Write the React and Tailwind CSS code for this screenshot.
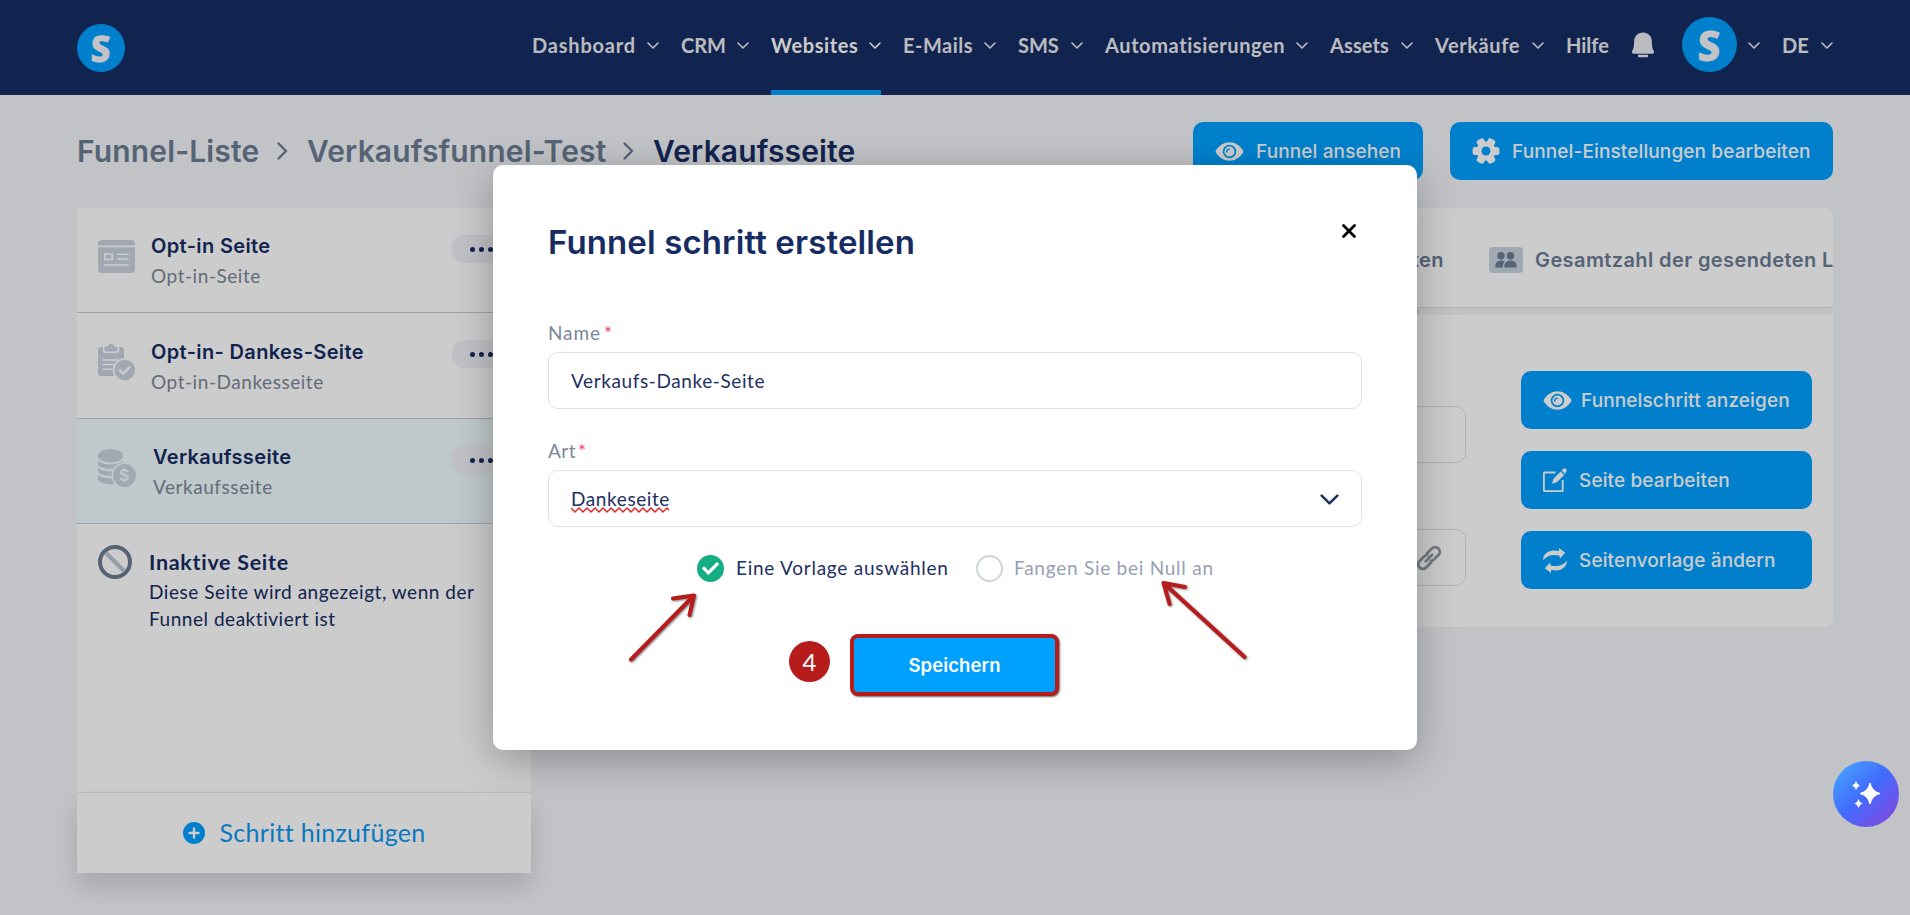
import React, { useState } from "react";
import { FaCheck } from "react-icons/fa";

const navItems = [
  { label: "Dashboard", className: "w-[103px] tracking-[0.8px]" },
  { label: "CRM", className: "w-[44px] tracking-[0px]" },
  { label: "Websites", className: "w-[86px] tracking-[0.6px]", active: true },
  { label: "E-Mails", className: "w-[69px] tracking-[0.5px]" },
  { label: "SMS", className: "w-[41px] tracking-[0px]" },
  { label: "Automatisierungen", className: "w-[179px] tracking-[0.6px]" },
  { label: "Assets", className: "w-[59px] tracking-[0.1px]" },
  { label: "Verkäufe", className: "w-[85px] tracking-[0.6px]" },
];

const Chevron = ({ className }) => (
  <svg viewBox="0 0 12 7" className={className} fill="none" stroke="currentColor" strokeLinecap="round" strokeLinejoin="round">
    <path d="M1 1l5 5 5-5" strokeWidth="1.6" />
  </svg>
);

const ChevronRight = () => (
  <svg viewBox="0 0 11 18" className="h-[18px] w-[11px] text-[#6b7c93]" fill="none" stroke="currentColor" strokeWidth="2.4" strokeLinecap="round" strokeLinejoin="round">
    <path d="M1.5 1.5L9 9l-7.5 7.5" />
  </svg>
);

const EyeIcon = () => (
  <svg viewBox="0 0 30 20" className="h-[19px] w-[29px] shrink-0">
    <path fill="currentColor" fillRule="evenodd" d="M.8 11.4C.2 10.5.2 9.5.8 8.6 4.200 3.400 9.200.2 15 .2s10.800 3.200 14.200 8.400c.6.9.6 1.900 0 2.800-3.400 5.200-8.400 8.400-14.200 8.400S4.200 16.600.8 11.400zM15 2.900a7.100 7.100 0 1 0 0 14.200 7.100 7.100 0 0 0 0-14.200z" />
    <path fill="currentColor" d="M15 4.700a5.300 5.300 0 1 0 0 10.600 5.300 5.300 0 0 0 0-10.600z" />
    <path d="M12 10.500a3 3 0 0 1 3-3" fill="none" stroke="#00a0ff" strokeWidth="1.500" strokeLinecap="round" />
  </svg>
);

const GearIcon = () => (
  <svg viewBox="0 0 28 28" className="size-[28px] shrink-0">
    <g fill="currentColor">
      <circle cx="14" cy="14" r="9.600" />
      {[30, 90, 150].map((deg) => (
        <rect key={deg} x="10" y="0.600" width="8" height="26.800" rx="2.600" transform={`rotate(${deg} 14 14)`} />
      ))}
    </g>
    <circle cx="14" cy="14" r="4.500" fill="#00a0ff" />
  </svg>
);

const EditIcon = () => (
  <svg viewBox="0 0 24 24" className="size-6 shrink-0">
    <path d="M12.500 4.500H1.800a.9.9 0 0 0-.9.9v16.900c0 .5.400.900.9.900h17a.9.900 0 0 0 .9-.9V12" fill="none" stroke="currentColor" strokeWidth="1.800" />
    <path fill="currentColor" d="M9 15.800l1.500-5L17.600 3.600l3.500 3.500-7.200 7.100zM18.600 2.600l1.700-1.800c.8-.8 1.800-.8 2.700 0 .9.9 1 2 .2 2.800L22 6.100z" />
  </svg>
);

const SwapIcon = () => (
  <svg viewBox="0 0 24 25" className="h-[25px] w-6 shrink-0" fill="currentColor">
    <path d="M0 12.300C-.2 6.500 5 2.500 10.500 2.500c2 0 3.800.2 5.500.5V0l6.200 4.800-5.200 5.700-.6-2.900C9.500 6 4.500 7.300 0 12.300z" />
    <path d="M24 12.700c.2 5.800-5 9.800-10.500 9.800-2 0-3.800-.2-5.500-.5V25l-6.200-4.800 5.200-5.700.6 2.900c6.900 1.600 11.900.3 16.400-4.700z" />
  </svg>
);

const LinkIcon = () => (
  <svg viewBox="0 0 26 26" className="size-[26px] text-[#9098a4]" fill="none" stroke="currentColor" strokeWidth="2.800" strokeLinecap="round">
    <path d="M9.800 16.200l6.400-6.400" />
    <path d="M11 8.500l4.900-4.900c1.900-1.900 4.600-1.900 6.500 0s1.900 4.600 0 6.500l-4.500 4.500c-.8.800-1.900 1.300-3.200 1.300" />
    <path d="M15 17.500l-4.900 4.900c-1.900 1.900-4.600 1.900-6.500 0s-1.900-4.600 0-6.500l4.500-4.500c.8-.8 1.900-1.300 3.200-1.300" />
  </svg>
);

const BrowserIcon = () => (
  <svg viewBox="0 0 37 33" className="h-[33px] w-[37px]">
    <path fill="currentColor" d="M0 5.500V4a4 4 0 0 1 4-4h29a4 4 0 0 1 4 4v1.500zM0 7.300h37V29a4 4 0 0 1-4 4H4a4 4 0 0 1-4-4z" />
    <g fill="none" stroke="#fff" strokeWidth="1.600" strokeLinecap="round">
      <rect x="6.800" y="14" width="7.400" height="5.400" />
      <path d="M19.500 14.200h11M19.500 19h11M6.500 25h24" />
    </g>
  </svg>
);

const ClipboardIcon = () => (
  <svg viewBox="0 0 38 38" className="size-[38px]">
    <rect x="0" y="4" width="26" height="29" rx="3.500" fill="currentColor" />
    <path d="M5.500 4.500v1.700c0 2 1.400 3.200 3.200 3.200h8.600c1.900 0 3.200-1.200 3.200-3.200V4.500c0-1.300-1-1.700-3-1.700h-.9C16 1 14.800 0 13 0s-3 1-3.600 2.800h-.9c-2 0-3 .400-3 1.700z" fill="currentColor" stroke="#fff" strokeWidth="1.600" />
    <path d="M5 17h15M5 21.500h11M5 26.200h9" stroke="#fff" strokeWidth="1.600" strokeLinecap="round" />
    <circle cx="26.800" cy="27" r="11.200" fill="currentColor" stroke="#fff" strokeWidth="1.700" />
    <path d="M21.800 27.300l3.500 3.400 6.300-6.600" fill="none" stroke="#fff" strokeWidth="2.400" strokeLinecap="round" strokeLinejoin="round" />
  </svg>
);

const CoinsIcon = () => (
  <svg viewBox="0 0 38 39" className="h-[39px] w-[38px]">
    <g fill="currentColor">
      <ellipse cx="12.500" cy="6.800" rx="12.500" ry="6.700" />
      <path d="M0 11.500c4.500 5.300 20.500 5.300 25 0v4.600c-4.300 5-20.700 5-25 0z" />
      <path d="M0 18.500c4.500 5.300 20.500 5.300 25 0v4.600c-4.300 5-20.700 5-25 0z" />
      <path d="M0 25.500c4.500 5.300 20.500 5.300 25 0v7c-4.300 4-20.700 4-25-1.500z" />
    </g>
    <circle cx="26.500" cy="26.500" r="12.200" fill="currentColor" stroke="#effafe" strokeWidth="1.600" />
    <text x="26.300" y="32.300" textAnchor="middle" fill="#effafe" fontFamily="Inter, sans-serif" fontSize="16" fontWeight="600">$</text>
  </svg>
);

const BanIcon = () => (
  <svg viewBox="0 0 34 34" className="size-[34px]" fill="none">
    <path d="M8 8l18 18" stroke="#bcc5d3" strokeWidth="4" />
    <circle cx="17" cy="17" r="15" stroke="#6b7c93" strokeWidth="4" />
  </svg>
);

const steps = [
  { title: "Opt-in Seite", type: "Opt-in-Seite", icon: <BrowserIcon />, row: "h-[105px]", iconBox: "mt-8", text: "mt-6 ml-4" },
  { title: "Opt-in- Dankes-Seite", type: "Opt-in-Dankesseite", icon: <ClipboardIcon />, row: "h-[106px]", iconBox: "mt-[30px]", text: "mt-[25px] ml-[15px]" },
  { title: "Verkaufsseite", type: "Verkaufsseite", icon: <CoinsIcon />, row: "h-[105px] bg-[#effafe]", iconBox: "mt-[30px]", text: "mt-6 ml-[17px]" },
];

const ActionButton = ({ icon, label, className }) => (
  <button className={`flex h-[58px] items-center rounded-[10px] bg-[#00a0ff] pl-[22px] text-[19px] font-medium tracking-[0.12px] whitespace-nowrap text-white ${className}`}>
    {icon}
    <span className="pt-[2px]">{label}</span>
  </button>
);

const Header = () => (
  <header className="flex h-[95px] items-center justify-between bg-[#162c63] px-[77px] font-['Lato','Open_Sans',sans-serif] text-[20px] font-bold text-[#e9ebf0]">
    <div className="flex size-12 items-center justify-center rounded-full bg-[#00a0ff] font-['Noto_Sans',sans-serif] text-[37px] leading-none font-black text-[#f2f4f9]">
      <span className="-skew-x-2 scale-x-95">S</span>
    </div>
    <nav className="flex h-[95px] items-start gap-[22px]">
      {navItems.map((item) => (
        <div
          key={item.label}
          className={`flex h-[95px] items-center gap-3 border-b-[5px] ${item.active ? "border-[#00a0ff] text-white" : "border-transparent"}`}
        >
          <span className={`whitespace-nowrap ${item.className}`}>{item.label}</span>
          <Chevron className="h-[7px] w-3" />
        </div>
      ))}
      <div className="flex h-[90px] items-center">
        <span className="w-[43px]">Hilfe</span>
        <svg viewBox="0 0 22 26" className="ml-[23px] h-[26px] w-[22px]" fill="currentColor">
          <path d="M11 .5c5.300 0 8.900 4 8.900 9 0 5.500.6 7 1.700 9 .3.500.4 1 .4 1.600 0 1-.6 1.700-1.700 1.700H1.700C.6 21.800 0 21.100 0 20.100c0-.6.1-1.100.4-1.600 1.100-2 1.700-3.500 1.700-9 0-5 3.600-9 8.900-9zM6 22.800h10v1.400c0 .8-.5 1-1.200 1H7.200c-.7 0-1.200-.2-1.200-1z" />
        </svg>
        <div className="mb-px ml-7 flex size-[55px] items-center justify-center rounded-full bg-[#00a0ff] font-['Noto_Sans',sans-serif] text-[42px] leading-none font-black text-[#f2f4f9]">
          <span className="-skew-x-2 scale-x-95">S</span>
        </div>
        <Chevron className="ml-[11px] h-[7px] w-3" />
        <span className="ml-[22px] w-[26px]">DE</span>
        <Chevron className="ml-[13px] h-[7px] w-3" />
      </div>
    </nav>
  </header>
);

const Sidebar = () => (
  <aside className="flex h-[665px] w-[454px] flex-col bg-white">
    {steps.map((step) => (
      <div key={step.title} className={`flex border-b border-[#c5ced9] pl-[21px] ${step.row}`}>
        <div className={`text-[#c9d2df] ${step.iconBox}`}>{step.icon}</div>
        <div className={step.text}>
          <h3 className="text-[20px] leading-7 font-semibold tracking-[0.36px] whitespace-nowrap">{step.title}</h3>
          <p className="mt-1 font-['Lato',sans-serif] text-[19px] leading-6 tracking-[0.55px] whitespace-nowrap text-[#7b8896]">
            {step.type}
          </p>
        </div>
        <button className="mt-[27px] mr-[20px] ml-auto flex h-7 w-[59px] items-center justify-center gap-1 rounded-[12px] bg-[#f1f2f8]">
          <i className="size-[5px] rounded-full bg-[#162c63]" />
          <i className="size-[5px] rounded-full bg-[#162c63]" />
          <i className="size-[5px] rounded-full bg-[#162c63]" />
        </button>
      </div>
    ))}
    <div className="flex grow pt-[21px] pl-[21px]">
      <BanIcon />
      <div className="ml-[17px] font-['Lato',sans-serif]">
        <h3 className="mt-[3px] text-[21.5px] leading-7 font-bold tracking-[0.7px]">Inaktive Seite</h3>
        <p className="mt-[2px] w-[340px] text-[19px] leading-[27px] tracking-[0.53px]">
          Diese Seite wird angezeigt, wenn der
          <br />
          Funnel deaktiviert ist
        </p>
      </div>
    </div>
    <button className="flex h-[81px] items-center justify-center gap-[15px] border-t border-[#ebebeb] font-['Lato',sans-serif] text-[25px] text-[#0d97f0] shadow-[0_14px_22px_rgba(0,0,0,0.14)]">
      <svg viewBox="0 0 22 22" className="size-[22px]">
        <circle cx="11" cy="11" r="11" fill="#00a0ff" />
        <path d="M11 6.500v9M6.500 11h9" stroke="#fff" strokeWidth="2.400" strokeLinecap="round" />
      </svg>
      <span className="tracking-[0.3px]">Schritt hinzufügen</span>
    </button>
  </aside>
);

const StepDetails = () => (
  <section className="h-[419px] grow overflow-hidden rounded-[8px] bg-white">
    <div className="flex h-[100px] items-center justify-end overflow-hidden border-b border-[#dcdee3] pt-[5px] text-[20px] font-semibold tracking-[0.4px] text-[#6b7c93]">
      <span className="shrink-0">Statistiken</span>
      <span className="ml-[45px] flex h-[26px] w-[34px] items-center justify-center rounded-[4px] bg-[#c9d2df]">
        <svg viewBox="0 0 22 16" className="h-4 w-[22px]" fill="currentColor">
          <circle cx="6" cy="3.800" r="3.700" />
          <circle cx="15.500" cy="3.800" r="3.700" />
          <path d="M.3 14.500C.3 11 2.500 8.500 6 8.500c1.500 0 2.700.400 3.600 1.200-1.300 1.300-1.900 3-1.900 5 0 .3 0 .5.100.8H1.300c-.7 0-1-.4-1-1zM9.300 14.500c0-3.600 2.600-6 6.200-6s6.200 2.400 6.200 6c0 .6-.4 1-1 1H10.300c-.6 0-1-.4-1-1z" />
        </svg>
      </span>
      <span className="ml-3 w-[298px] shrink-0 overflow-hidden whitespace-nowrap">Gesamtzahl der gesendeten L</span>
    </div>
    <div className="h-[7px] rounded-full bg-[#f4f4f4]">
      <div className="h-[7px] w-[864px] rounded-full bg-[#d4d7de]" />
    </div>
    <div className="flex justify-between pr-[21px] pl-[31px]">
      <div className="mt-[91px] w-[880px] space-y-[66px]">
        <div className="h-[57px] rounded-[10px] border border-[#dcdee3]" />
        <div className="flex h-[57px] items-center justify-end rounded-[10px] border border-[#dcdee3] pr-[23px]">
          <LinkIcon />
        </div>
      </div>
      <div className="mt-14 w-[291px] space-y-[22px]">
        <ActionButton icon={<EyeIcon />} label="Funnelschritt anzeigen" className="w-full gap-[9px]" />
        <ActionButton icon={<EditIcon />} label="Seite bearbeiten" className="w-full gap-3" />
        <ActionButton icon={<SwapIcon />} label="Seitenvorlage ändern" className="w-full gap-3" />
      </div>
    </div>
  </section>
);

const StepModal = () => {
  const [name, setName] = useState("Verkaufs-Danke-Seite");

  return (
    <div className="mt-[165px] flex h-[585px] w-[924px] flex-col rounded-[10px] bg-white px-[55px] font-['Lato',sans-serif] text-[#1e2f63] shadow-[0_10px_40px_rgba(0,0,0,0.28)]">
      <div className="flex h-[152px] items-start justify-between">
        <h2 className="mt-[57px] font-['Inter',sans-serif] text-[33px] leading-10 font-semibold tracking-[0.12px] text-[#162c63]">
          Funnel schritt erstellen
        </h2>
        <svg viewBox="0 0 14 14" className="mt-[59px] mr-[6px] size-[14px]" stroke="#000" strokeWidth="2.800" strokeLinecap="round">
          <path d="M1.500 1.500l11 11M12.500 1.500l-11 11" />
        </svg>
      </div>
      <label className="mt-1 flex h-[31px] gap-[3px] text-[19px] leading-6 tracking-[0.9px] text-[#7b869c]">
        Name<span className="text-[#f1416c]">*</span>
      </label>
      <input
        value={name}
        onChange={(e) => setName(e.target.value)}
        className="h-[57px] shrink-0 rounded-[10px] border border-[#e1e3e8] px-[22px] text-[19px] tracking-[0.6px]"
      />
      <label className="mt-[30px] flex h-[31px] gap-[2px] text-[19px] leading-6 tracking-[0.5px] text-[#7b869c]">
        Art<span className="text-[#f1416c]">*</span>
      </label>
      <div className="flex h-[57px] shrink-0 items-center justify-between rounded-[10px] border border-[#e1e3e8] px-[22px] text-[19px]">
        <div className="relative mt-[2px] tracking-[0.6px]">
          Dankeseite
          <svg className="absolute top-[22px] left-0 h-[6px] w-[98px]" fill="none" stroke="#e02020" strokeWidth="1.400">
            <path d="M0 1l4 4 4-4 4 4 4-4 4 4 4-4 4 4 4-4 4 4 4-4 4 4 4-4 4 4 4-4 4 4 4-4 4 4 4-4 4 4 4-4 4 4 4-4 4 4 4-4 4 4" />
          </svg>
        </div>
        <Chevron className="mt-px h-[11px] w-[19px]" />
      </div>
      <div className="mt-[27px] flex h-7 items-center pl-[149px] text-[19px] whitespace-nowrap">
        <span className="flex size-[27px] items-center justify-center rounded-full bg-[#14ae85] text-white">
          <FaCheck className="size-[17px]" />
        </span>
        <span className="mt-px ml-3 w-[212px] tracking-[0.75px]">Eine Vorlage auswählen</span>
        <span className="ml-[28px] size-[27px] rounded-full border-2 border-[#cfd3dc]" />
        <span className="mt-px ml-[11px] tracking-[0.75px] text-[#98a0b4]">Fangen Sie bei Null an</span>
      </div>
      <div className="mt-[52px] flex items-center pl-[241px]">
        <span className="mb-[7px] flex size-[41px] items-center justify-center rounded-full bg-[#b71c1c] text-[24px] text-white">
          4
        </span>
        <button className="ml-5 h-[62px] w-[209px] rounded-[8px] border-4 border-[#b71c1c] bg-[#00a0ff] pt-[2px] font-['Inter',sans-serif] text-[18.5px] font-semibold tracking-[0.1px] text-white shadow-[1px_1px_2px_rgba(0,0,0,0.6)]">
          Speichern
        </button>
      </div>
    </div>
  );
};

// red pointers to the two template options
const Pointers = () => (
  <svg viewBox="0 0 640 90" className="pointer-events-none absolute top-[575px] left-[620px] h-[90px] w-[640px] drop-shadow-[1px_1px_1px_rgba(0,0,0,0.5)]" fill="none" stroke="#b71c1c" strokeWidth="4" strokeLinecap="round" strokeLinejoin="round">
    <path d="M11 84.500L74 20.500M53 23.500l21-3-4.500 19.500" />
    <path d="M624.500 82L543.500 8M565 12l-21.500-4 6 21" />
  </svg>
);

const App = () => (
  <div className="relative h-[915px] w-[1910px] overflow-hidden bg-[#f2f4f9] font-['Inter',sans-serif] text-[#162c63]">
    <Header />
    <main className="px-[77px] pt-[27px]">
      <div className="flex h-[58px] items-center">
        <div className="flex items-center text-[30px] font-semibold tracking-[0.14px] whitespace-nowrap text-[#6b7c93]">
          <span className="w-[200px]">Funnel-Liste</span>
          <ChevronRight />
          <span className="ml-[19px] w-[316px]">Verkaufsfunnel-Test</span>
          <ChevronRight />
          <span className="ml-[19px] text-[#162c63]">Verkaufsseite</span>
        </div>
        <ActionButton icon={<EyeIcon />} label="Funnel ansehen" className="ml-auto w-[230px] gap-3" />
        <ActionButton icon={<GearIcon />} label="Funnel-Einstellungen bearbeiten" className="ml-[27px] w-[383px] gap-3" />
      </div>
      <div className="mt-7 flex items-start gap-6">
        <Sidebar />
        <StepDetails />
      </div>
    </main>
    <div className="absolute inset-0 flex items-start justify-center bg-black/20">
      <StepModal />
    </div>
    <Pointers />
    <button className="absolute top-[761px] left-[1833px] flex size-[66px] items-center justify-center rounded-full bg-linear-to-br from-[#4aa8ff] via-[#4169ff] to-[#8040d8]">
      <svg viewBox="0 0 28 28" className="size-7" fill="#fff">
        <path d="M18 3q2 8.500 10 10.500-8 2-10 10.500-2-8.500-10-10.500 8-2 10-10.500z" stroke="#fff" strokeLinejoin="round" />
        <path d="M4 1q.8 3.500 4 4.500-3.200 1-4 4.500-.8-3.500-4-4.500Q3.200 4.500 4 1zM6.500 19q.8 3.500 4 4.500-3.200 1-4 4.500-.8-3.500-4-4.500 3.200-1 4-4.500z" />
      </svg>
    </button>
  </div>
);

export default App;
